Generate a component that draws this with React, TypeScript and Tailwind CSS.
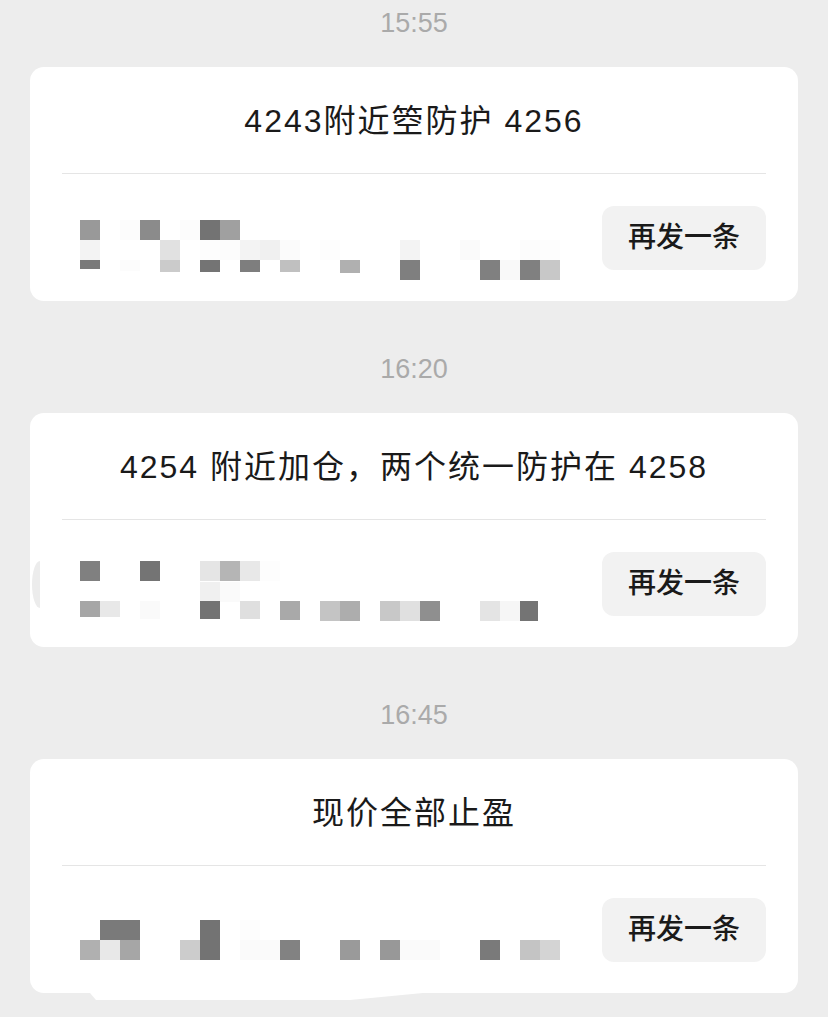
type Cell = [number, number, string, number?, number?];

const font = { fontFamily: '"Liberation Sans", "Noto Sans CJK SC", sans-serif' };

const messages: { time: string; text: string; cells: Cell[] }[] = [
  {
    time: "15:55",
    text: "4243附近箜防护 4256",
    cells: [
      [50, 46, "#999999"], [90, 46, "#fcfcfc"], [110, 46, "#8b8b8b"], [150, 46, "#fcfcfc"], [170, 46, "#737373"], [190, 46, "#a0a0a0"],
      [50, 66, "#f3f3f3"], [130, 66, "#e1e1e1"], [170, 66, "#fdfdfd"], [190, 66, "#fcfcfc"], [210, 66, "#f3f3f3"], [230, 66, "#f0f0f0"],
      [250, 66, "#fbfbfb"], [290, 66, "#fdfdfd"], [370, 66, "#f3f3f3"], [430, 66, "#fafafa"], [490, 66, "#fcfcfc"], [510, 66, "#fdfdfd"],
      [50, 86, "#7a7a7a", 9], [90, 86, "#fcfcfc", 11], [130, 86, "#cbcbcb", 12], [170, 86, "#747474", 12], [210, 86, "#7e7e7e", 12],
      [250, 86, "#c0c0c0", 12], [310, 86, "#b0b0b0", 13], [370, 86, "#7f7f7f"], [450, 86, "#808080"], [470, 86, "#f9f9f9"],
      [490, 86, "#808080"], [510, 86, "#c8c8c8"],
    ],
  },
  {
    time: "16:20",
    text: "4254 附近加仓，两个统一防护在 4258",
    cells: [
      [50, 41, "#808080"], [110, 41, "#747474"], [170, 41, "#e5e5e5"], [190, 41, "#b5b5b5"], [210, 41, "#e8e8e8"], [230, 41, "#fdfdfd"],
      [170, 62, "#f0f0f0"], [190, 62, "#fafafa"],
      [50, 81, "#a6a6a6", 16], [70, 81, "#e8e8e8", 16], [110, 81, "#fafafa", 18], [170, 81, "#737373", 18], [210, 81, "#dfdfdf", 18],
      [250, 81, "#a9a9a9", 19], [290, 81, "#c4c4c4"], [310, 81, "#adadad"], [350, 81, "#c8c8c8"], [370, 81, "#e0e0e0"],
      [390, 81, "#8f8f8f"], [450, 81, "#e4e4e4"], [470, 81, "#f6f6f6"], [490, 81, "#747474", 20, 18],
    ],
  },
  {
    time: "16:45",
    text: "现价全部止盈",
    cells: [
      [70, 54, "#7a7a7a", 20, 40], [170, 54, "#737373"], [210, 54, "#fdfdfd"],
      [50, 74, "#b0b0b0"], [70, 74, "#e8e8e8"], [90, 74, "#a6a6a6"], [150, 74, "#cccccc"], [170, 74, "#737373"],
      [210, 74, "#fafafa"], [230, 74, "#fafafa"], [250, 74, "#828282"], [310, 74, "#9a9a9a"], [350, 74, "#989898"],
      [370, 74, "#fafafa"], [390, 74, "#fafafa"], [450, 74, "#7a7a7a"], [490, 74, "#c4c4c4"], [510, 74, "#d4d4d4"],
    ],
  },
];

function Mosaic({ cells }: { cells: Cell[] }) {
  return (
    <svg width="540" height="127" className="shrink-0">
      {cells.map(([x, y, c, h, w], i) => (
        <rect key={i} x={x} y={y} width={w ?? 20} height={h ?? 20} fill={c} />
      ))}
    </svg>
  );
}

export default function App() {
  return (
    <div className="min-h-screen overflow-hidden bg-[#ededed] pt-[7px]" style={font}>
      <div className="flex flex-col gap-[52px]">
        {messages.map((m, idx) => (
          <div key={m.time} className="flex flex-col items-center gap-[28px]">
            <div className="h-8 text-[27px] leading-8 text-[#aaaaaa]">{m.time}</div>
            <div className="relative mx-[30px] flex h-[234px] w-[768px] flex-col rounded-[14px] bg-white">
              <div className="flex h-[106px] items-center justify-center pt-[2px] text-[32px] tracking-[2px] text-[#1a1a1a]">
                {m.text}
              </div>
              <div className="mx-8 h-px bg-[#e5e5e5]" />
              <div className="flex flex-1 items-center">
                <Mosaic cells={m.cells} />
                <button className="ml-auto mr-8 flex h-16 w-[164px] items-center justify-center rounded-xl bg-[#f2f2f2] text-[28px] font-medium text-[#1a1a1a]">
                  再发一条
                </button>
              </div>
              {idx === 1 && (
                <svg className="absolute left-0 top-[140px]" width="12" height="60">
                  <path d="M10 8 A8 23.5 0 0 0 10 55 Z" fill="#ececec" />
                </svg>
              )}
              {idx === 2 && (
                <svg className="absolute left-[60px] top-full" width="340" height="8">
                  <polygon points="0,0 6,7 260,7 333,0" fill="#ffffff" />
                </svg>
              )}
            </div>
          </div>
        ))}
      </div>
    </div>
  );
}
